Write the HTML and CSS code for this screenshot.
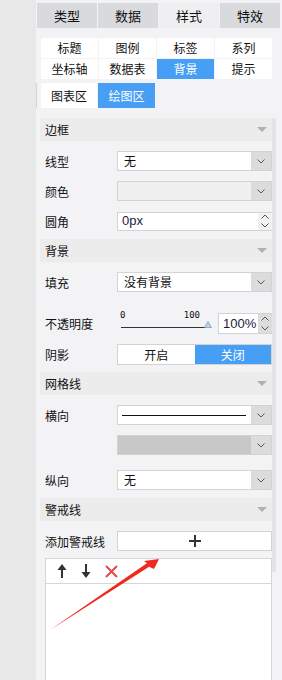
FILE: index.html
```html
<!DOCTYPE html>
<html lang="zh">
<head>
    <meta charset="UTF-8">
    <meta name="viewport" content="width=device-width, initial-scale=1.0">
    <title>样式</title>
    <link rel="stylesheet" href="styles.css">
</head>
<body>
    <div id="gutter"></div>

    <div id="panel">
        <div class="tabs">
            <div class="tab">类型</div>
            <div class="tab">数据</div>
            <div class="tab active">样式</div>
            <div class="tab">特效</div>
        </div>

        <div class="subtabs">
            <div class="subtab">标题</div>
            <div class="subtab">图例</div>
            <div class="subtab">标签</div>
            <div class="subtab">系列</div>
            <div class="subtab">坐标轴</div>
            <div class="subtab">数据表</div>
            <div class="subtab active">背景</div>
            <div class="subtab">提示</div>
        </div>

        <div class="areatabs">
            <div class="subtab">图表区</div>
            <div class="subtab active">绘图区</div>
        </div>

        <div class="scrollarea">
            <div class="sections">

                <!-- 边框 -->
                <div class="section-head">边框<span class="caret"></span></div>
                <div class="section-body">
                    <div class="row">
                        <div class="label">线型</div>
                        <div class="select">
                            <div class="value">无</div>
                            <div class="btn"><svg width="8" height="5" viewBox="0 0 8 5"><path d="M0.5 0.5 L4 4 L7.5 0.5" fill="none" stroke="#555" stroke-width="1"/></svg></div>
                        </div>
                    </div>
                    <div class="row">
                        <div class="label">颜色</div>
                        <div class="select disabled">
                            <div class="value"></div>
                            <div class="btn"><svg width="8" height="5" viewBox="0 0 8 5"><path d="M0.5 0.5 L4 4 L7.5 0.5" fill="none" stroke="#555" stroke-width="1"/></svg></div>
                        </div>
                    </div>
                    <div class="row">
                        <div class="label">圆角</div>
                        <div class="number wide">
                            <div class="value num">0px</div>
                            <div class="spin light">
                                <svg width="8" height="5" viewBox="0 0 8 5"><path d="M0.5 4.5 L4 1 L7.5 4.5" fill="none" stroke="#555" stroke-width="1"/></svg>
                                <svg width="8" height="5" viewBox="0 0 8 5"><path d="M0.5 0.5 L4 4 L7.5 0.5" fill="none" stroke="#555" stroke-width="1"/></svg>
                            </div>
                        </div>
                    </div>
                </div>

                <!-- 背景 -->
                <div class="section-head">背景<span class="caret"></span></div>
                <div class="section-body">
                    <div class="row">
                        <div class="label">填充</div>
                        <div class="select">
                            <div class="value">没有背景</div>
                            <div class="btn"><svg width="8" height="5" viewBox="0 0 8 5"><path d="M0.5 0.5 L4 4 L7.5 0.5" fill="none" stroke="#555" stroke-width="1"/></svg></div>
                        </div>
                    </div>
                    <div class="row tall">
                        <div class="label">不透明度</div>
                        <div class="slider">
                            <div class="ticks"><span>0</span><span>100</span></div>
                            <div class="track">
                                <div class="line"></div>
                                <svg width="8" height="7" viewBox="0 0 8 7"><path d="M4 0.5 L7.5 6.5 L0.5 6.5 Z" fill="#b9d3ee" stroke="#7a9cc2" stroke-width="0.8"/></svg>
                            </div>
                        </div>
                        <div class="number">
                            <div class="value num">100%</div>
                            <div class="spin">
                                <svg width="8" height="5" viewBox="0 0 8 5"><path d="M0.5 4.5 L4 1 L7.5 4.5" fill="none" stroke="#555" stroke-width="1"/></svg>
                                <svg width="8" height="5" viewBox="0 0 8 5"><path d="M0.5 0.5 L4 4 L7.5 0.5" fill="none" stroke="#555" stroke-width="1"/></svg>
                            </div>
                        </div>
                    </div>
                    <div class="row">
                        <div class="label">阴影</div>
                        <div class="toggle">
                            <div class="half">开启</div>
                            <div class="half on">关闭</div>
                        </div>
                    </div>
                </div>

                <!-- 网格线 -->
                <div class="section-head">网格线<span class="caret"></span></div>
                <div class="section-body">
                    <div class="row">
                        <div class="label">横向</div>
                        <div class="select">
                            <div class="value"><div class="solid"></div></div>
                            <div class="btn"><svg width="8" height="5" viewBox="0 0 8 5"><path d="M0.5 0.5 L4 4 L7.5 0.5" fill="none" stroke="#555" stroke-width="1"/></svg></div>
                        </div>
                    </div>
                    <div class="row">
                        <div class="label"></div>
                        <div class="select">
                            <div class="value gray"></div>
                            <div class="btn"><svg width="8" height="5" viewBox="0 0 8 5"><path d="M0.5 0.5 L4 4 L7.5 0.5" fill="none" stroke="#555" stroke-width="1"/></svg></div>
                        </div>
                    </div>
                    <div class="row gap">
                        <div class="label">纵向</div>
                        <div class="select">
                            <div class="value">无</div>
                            <div class="btn"><svg width="8" height="5" viewBox="0 0 8 5"><path d="M0.5 0.5 L4 4 L7.5 0.5" fill="none" stroke="#555" stroke-width="1"/></svg></div>
                        </div>
                    </div>
                </div>

                <!-- 警戒线 -->
                <div class="section-head">警戒线<span class="caret"></span></div>
                <div class="section-body last">
                    <div class="row">
                        <div class="label">添加警戒线</div>
                        <div class="addbtn">
                            <svg width="12" height="12" viewBox="0 0 12 12"><path d="M6 0 V12 M0 6 H12" stroke="#333" stroke-width="2"/></svg>
                        </div>
                    </div>
                    <div class="list">
                        <div class="toolbar">
                            <svg width="10" height="14" viewBox="0 0 10 14"><path d="M5 0 L9.5 6 L0.5 6 Z" fill="#333"/><path d="M5 5 V14" stroke="#333" stroke-width="2"/></svg>
                            <svg width="10" height="14" viewBox="0 0 10 14"><path d="M5 14 L9.5 8 L0.5 8 Z" fill="#333"/><path d="M5 0 V9" stroke="#333" stroke-width="2"/></svg>
                            <svg width="13" height="13" viewBox="0 0 13 13"><path d="M1 1 L12 12 M12 1 L1 12" stroke="#e5484d" stroke-width="2"/></svg>
                        </div>
                    </div>
                </div>

            </div>
            <div class="scrollbar"><div class="thumb"></div></div>
        </div>
    </div>

    <!-- annotation arrow drawn over the page -->
    <svg class="annot" width="282" height="680" viewBox="0 0 282 680">
        <path d="M50 630 L146.9 563.3 L144 561 L159 559 L154 569 L149.1 566.7 Z" fill="#f0281e"/>
    </svg>
</body>
</html>
```

FILE: styles.css
```css
body {
    font-family: "Noto Sans CJK SC", "Noto Sans", sans-serif;
    font-size: 12px;
    color: #111;
    margin: 0;
    padding: 0;
    display: flex;
    height: 680px;
    overflow: hidden;
    background-color: #f3f3f5;
}

#gutter {
    width: 36px;
    flex: none;
    background-color: #e8e8e8;
}

#panel {
    flex: 1;
    background-color: #f3f3f5;
}

.tabs {
    display: grid;
    grid-template-columns: repeat(4, 60px);
    column-gap: 1px;
    margin: 3px 0 0 1px;
}

.tab {
    height: 25px;
    line-height: 25px;
    text-align: center;
    font-size: 13px;
    background-color: #d9dadd;
}

.tab.active {
    background-color: #efeff1;
}

.subtabs {
    display: grid;
    grid-template-columns: repeat(4, 57px);
    grid-auto-rows: 20px;
    gap: 1px;
    margin: 10px 0 0 5px;
}

.subtab {
    background-color: #fff;
    text-align: center;
    line-height: 20px;
}

.subtab.active {
    background-color: #479ef5;
    color: #fff;
}

.areatabs {
    display: grid;
    grid-template-columns: 56px 57px;
    column-gap: 1px;
    margin-top: 4px;
    padding-left: 4px;
    border-left: 1px solid #d4d4d4;
    height: 25px;
}

.areatabs .subtab {
    line-height: 25px;
}

.scrollarea {
    display: flex;
    margin: 10px 0 0 4px;
}

.sections {
    width: 232px;
}

.scrollbar {
    width: 4px;
}

.thumb {
    height: 454px;
    background-color: #e4e4e6;
}

.section-head {
    height: 23px;
    line-height: 23px;
    padding-left: 5px;
    background-color: #ececec;
    display: flex;
    justify-content: space-between;
    align-items: center;
    font-size: 12px;
}

.caret {
    width: 0;
    height: 0;
    border-left: 5px solid transparent;
    border-right: 5px solid transparent;
    border-top: 5px solid #b0b0b0;
    margin-right: 5px;
}

.section-body {
    padding-bottom: 8px;
}

.section-body.last {
    padding-bottom: 0;
}

.row {
    display: flex;
    align-items: center;
    height: 20px;
    margin-top: 10px;
}

.row.tall {
    height: 32px;
    align-items: flex-end;
}

.row.gap {
    margin-top: 15px;
}

.label {
    width: 77px;
    padding-left: 5px;
    box-sizing: border-box;
    flex: none;
}

.row.tall .label {
    line-height: 21px;
}

.select {
    flex: 1;
    display: flex;
    height: 20px;
    box-sizing: border-box;
    border: 1px solid #d3d3d3;
    background-color: #fff;
}

.select.disabled {
    background-color: #f0f0f0;
}

.value {
    flex: 1;
    padding-left: 6px;
    line-height: 18px;
    display: flex;
    align-items: center;
}

.value.gray {
    background-color: #c8c8c8;
}

.solid {
    width: 124px;
    height: 1px;
    background-color: #111;
    margin-left: -2px;
}

.btn {
    width: 20px;
    display: flex;
    align-items: center;
    justify-content: center;
    background-color: #dcdcdc;
}

.number {
    display: flex;
    height: 21px;
    width: 54px;
    margin-left: 3px;
    box-sizing: border-box;
    border: 1px solid #d3d3d3;
    border-right: none;
    background-color: #fff;
}

.number.wide {
    flex: 1;
    margin-left: 0;
    height: 19px;
}

.num {
    font-family: "Liberation Sans", Arial, sans-serif;
    font-size: 13px;
    color: #1a1a3a;
    padding-left: 4px;
}

.spin {
    width: 14px;
    display: flex;
    flex-direction: column;
    align-items: center;
    justify-content: space-around;
    background-color: #dcdcdc;
}

.spin.light {
    background-color: #f2f2f2;
}

.slider {
    width: 98px;
    display: flex;
    flex-direction: column;
    padding-bottom: 6px;
}

.ticks {
    display: flex;
    justify-content: space-between;
    font-family: "DejaVu Sans Mono", monospace;
    font-size: 9px;
    line-height: 10px;
    padding: 0 15px 0 3px;
}

.track {
    display: flex;
    align-items: flex-end;
    padding-left: 4px;
    margin-top: 1px;
}

.track .line {
    flex: 1;
    height: 1px;
    background-color: #333;
    margin-right: -2px;
}

.track svg {
    margin-right: 3px;
}

.toggle {
    flex: 1;
    display: flex;
    height: 21px;
    box-sizing: border-box;
    border: 1px solid #d3d3d3;
    background-color: #fff;
}

.half {
    flex: 1;
    text-align: center;
    line-height: 19px;
}

.half.on {
    background-color: #479ef5;
    color: #fff;
}

.addbtn {
    flex: 1;
    height: 20px;
    box-sizing: border-box;
    border: 1px solid #d3d3d3;
    background-color: #fff;
    display: flex;
    align-items: center;
    justify-content: center;
}

.list {
    margin: 7px 0 0 5px;
    height: 140px;
    border: 1px solid #d6d6d6;
    background-color: #fff;
}

.toolbar {
    height: 24px;
    border-bottom: 1px solid #d6d6d6;
    display: flex;
    align-items: center;
    gap: 14px;
    padding-left: 11px;
}

.annot {
    position: absolute;
    top: 0;
    left: 0;
    pointer-events: none;
}
```
